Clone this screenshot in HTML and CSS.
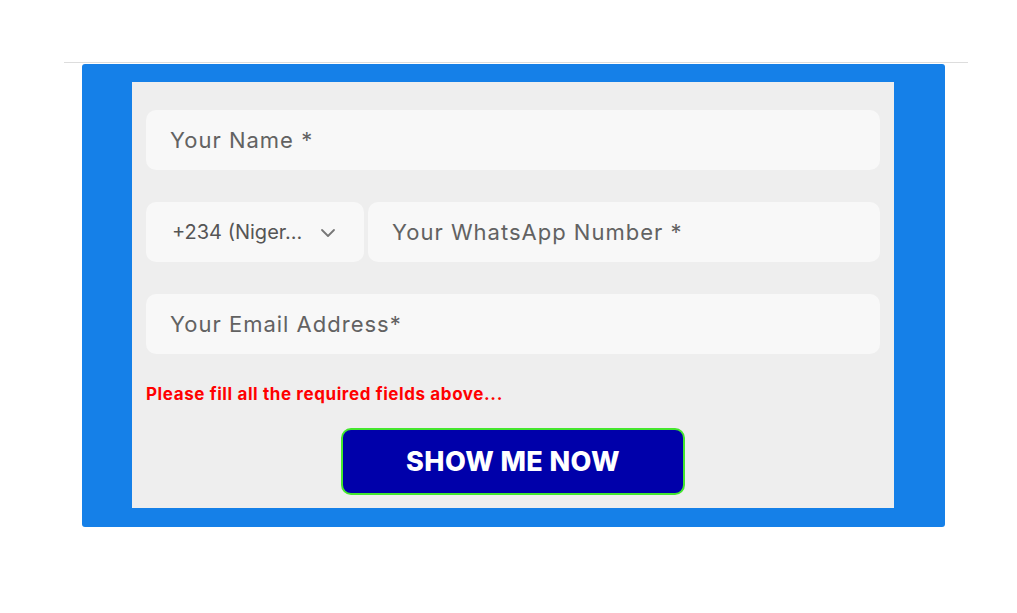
FILE: index.html
```html
<!DOCTYPE html>
<html lang="en">
<head>
<meta charset="utf-8">
<title>Form</title>
<link rel="stylesheet" href="styles.css">
</head>
<body>
<div class="page">
  <hr class="rule">
  <section class="frame">
    <form class="panel">
      <input class="field" type="text" placeholder="Your Name *">
      <div class="row">
        <div class="select">
          <span class="select-text">+234 (Niger...</span>
          <svg class="chev" width="16" height="10" viewBox="0 0 16 10"><path d="M2 2 L8 8 L14 2" fill="none" stroke="#777" stroke-width="1.8" stroke-linecap="round" stroke-linejoin="round"/></svg>
        </div>
        <input class="field grow" type="tel" placeholder="Your WhatsApp Number *">
      </div>
      <input class="field" type="email" placeholder="Your Email Address*">
      <p class="error">Please fill all the required fields above...</p>
      <div class="actions">
        <button class="btn" type="button">SHOW ME NOW</button>
      </div>
    </form>
  </section>
</div>
</body>
</html>
```

FILE: styles.css
```css
* { box-sizing: border-box; }
html, body { margin: 0; padding: 0; background: #ffffff; }
body { font-family: Inter, "Open Sans", sans-serif; }
.page { padding-top: 62px; }
.rule {
  margin: 0 49px 0 64px;
  border: 0;
  border-top: 1px solid #dddddd;
  height: 0;
}
.frame {
  margin: 1px 72px 0 82px;
  background: #1580e8;
  border-radius: 3px;
  padding: 18px 51px 19px 50px;
}
.panel {
  background: #eeeeee;
  padding: 28px 14px 13px 14px;
  display: flex;
  flex-direction: column;
}
.field, .select {
  height: 60px;
  border: 0;
  border-radius: 10px;
  background: #f8f8f8;
  font-family: Inter, "Open Sans", sans-serif;
  font-size: 22px;
  letter-spacing: 1px;
  color: #555;
  padding: 0 24px;
  outline: none;
}
.field::placeholder { color: #626262; opacity: 1; }
.field + .row, .row + .field { margin-top: 32px; }
.row { display: flex; gap: 4px; }
.select {
  width: 218px;
  display: flex;
  align-items: center;
  justify-content: space-between;
  padding: 0 28px 0 26px;
  font-size: 20px;
  letter-spacing: 0;
  color: #555;
  flex: none;
}
.chev { margin-top: 2px; }
.grow { flex: 1; min-width: 0; }
.error {
  margin: 28px 0 0 0;
  color: #ff0000;
  font-weight: 700;
  font-size: 17px;
  letter-spacing: 0.6px;
  line-height: 24px;
}
.actions { display: flex; justify-content: center; margin-top: 22px; }
.btn {
  width: 344px;
  height: 67px;
  background: #0000aa;
  border: 2px solid #44e62e;
  border-radius: 10px;
  color: #fff;
  font-family: Inter, "Open Sans", sans-serif;
  font-weight: 800;
  font-size: 27px;
  letter-spacing: 0.4px;
  cursor: pointer;
}
```
